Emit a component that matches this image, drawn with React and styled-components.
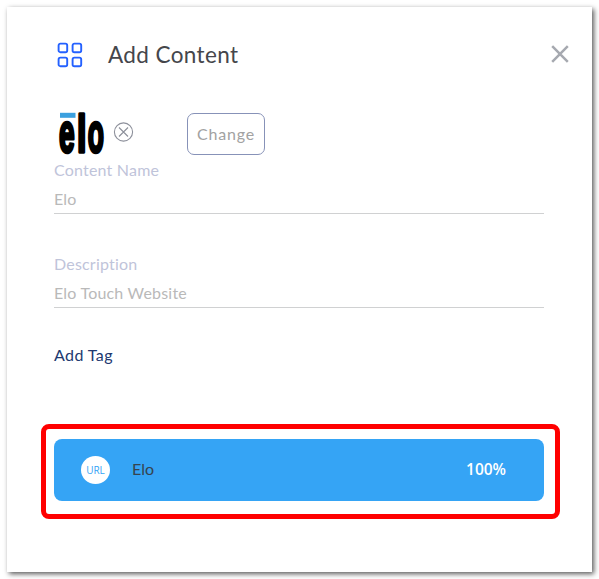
import React from "react";
import styled, { createGlobalStyle } from "styled-components";

const Global = createGlobalStyle`
  * { box-sizing: border-box; }
  body { margin: 0; background: #fff; font-family: Lato, "Liberation Sans", sans-serif; }
`;

const Page = styled.main`
  width: 599px;
  height: 579px;
  padding: 7px;
  overflow: hidden;
`;

const Dialog = styled.section`
  width: 585px;
  height: 565px;
  padding: 31px 48px 0 47px;
  background: #fff;
  box-shadow: 2px 2px 5px rgba(0, 0, 0, 0.65);
`;

const Header = styled.header`
  display: flex;
  align-items: center;
  height: 34px;
  padding-left: 3px;
  margin-right: -25px;
`;

const Text = styled.span`
  display: block;
  white-space: nowrap;
  font-family: ${(p) => p.$font || "inherit"};
  font-size: ${(p) => p.$size || 16}px;
  font-weight: ${(p) => p.$weight || 400};
  line-height: 20px;
  letter-spacing: ${(p) => p.$spacing || 0}px;
  color: ${(p) => p.$color};
`;

const Title = styled(Text).attrs({ as: "h1" })`
  flex: 1;
  margin: 0 0 0 25px;
`;

const IconButton = styled.button`
  display: flex;
  padding: 0;
  border: 0;
  background: none;
`;

const CloseButton = styled(IconButton)`
  margin: 0 0 2px 0;
`;

const LogoRow = styled.div`
  display: flex;
  height: 44px;
  margin-top: 39px;
  padding-left: 3px;
`;

const Logo = styled.svg`
  display: block;
  overflow: visible;
`;

const RemoveButton = styled(IconButton)`
  align-self: flex-start;
  margin: 10px 0 0 6px;
`;

const ChangeButton = styled.button`
  display: flex;
  align-items: center;
  justify-content: center;
  width: 78px;
  height: 42px;
  margin: 2px 0 0 53px;
  padding: 0;
  border: 1px solid #8792b8;
  border-radius: 7px;
  background: #fff;
  font-family: inherit;
`;

const Field = styled.div`
  height: 59px;
  margin-top: ${(p) => p.$gap}px;
  padding-top: 5px;
  border-bottom: 1px solid #d0d1d2;
`;

const Value = styled.div`
  margin-top: 9px;
`;

const TagLink = styled.div`
  margin-top: 37px;
`;

const Highlight = styled.div`
  width: 519px;
  height: 95px;
  margin: 59px 0 0 -13px;
  padding: 10px 11px 0 8px;
  border: 5px solid #ff0000;
  border-radius: 8px;
`;

const UploadCard = styled.div`
  display: flex;
  align-items: center;
  width: 490px;
  height: 62px;
  padding: 0 38px 0 27px;
  border-radius: 8px;
  background: #35a4f5;
`;

const UrlBadge = styled.div`
  display: flex;
  align-items: center;
  justify-content: center;
  width: 29px;
  height: 28px;
  border-radius: 50%;
  background: #fff;
`;

const FileName = styled.div`
  flex: 1;
  margin: -3px 0 0 22px;
`;

const Percent = styled.div`
  margin-top: -3px;
`;

const GridIcon = () => (
  <svg width="26" height="26" viewBox="0 0 26 26" fill="none" stroke="#2461ff" strokeWidth="1.9">
    <rect x="1.6" y="1.6" width="8.6" height="8.6" rx="1.8" />
    <rect x="15.6" y="1.6" width="8.6" height="8.6" rx="1.8" />
    <rect x="1.6" y="15.6" width="8.6" height="8.6" rx="1.8" />
    <rect x="15.6" y="15.6" width="8.6" height="8.6" rx="1.8" />
  </svg>
);

const CloseIcon = () => (
  <svg width="18" height="18" viewBox="0 0 18 18" stroke="#a6a9b0" strokeWidth="2.5">
    <path d="M1.2 1.2 16.8 16.8M16.8 1.2 1.2 16.8" />
  </svg>
);

const EloLogo = () => (
  <Logo width="50" height="44" viewBox="0 0 50 44" role="img" aria-label="elo">
    <rect x="3" y="1.8" width="15.5" height="5" fill="#3ba0df" />
    <g fontFamily="Liberation Sans" fontWeight="700" fontSize="53" stroke="#000" strokeWidth="3.4" strokeLinejoin="round">
      <text transform="translate(2.1 40.8) scale(.53 1.03)">e</text>
      <text transform="translate(20 41.1) scale(.64 .98)">l</text>
      <text transform="translate(30.8 40.8) scale(.5 1.03)">o</text>
    </g>
  </Logo>
);

const RemoveIcon = () => (
  <svg width="21" height="21" viewBox="0 0 21 21" fill="none" stroke="#8d909b" strokeWidth="1.1">
    <circle cx="10.5" cy="11" r="9.1" />
    <path d="m6 6.5 9 9m0-9-9 9" />
  </svg>
);

export default function App() {
  return (
    <>
      <Global />
      <Page>
        <Dialog>
          <Header>
            <GridIcon />
            <Title $size={22.5} $spacing={0.38} $color="#45464b">Add Content</Title>
            <CloseButton aria-label="Close"><CloseIcon /></CloseButton>
          </Header>
          <LogoRow>
            <EloLogo />
            <RemoveButton aria-label="Remove logo"><RemoveIcon /></RemoveButton>
            <ChangeButton><Text $spacing={0.8} $color="#a2a2a2">Change</Text></ChangeButton>
          </LogoRow>
          <Field $gap={0}>
            <Text $spacing={0.2} $color="#bfc4da">Content Name</Text>
            <Value><Text $spacing={0.2} $color="#b9b9b9">Elo</Text></Value>
          </Field>
          <Field $gap={35}>
            <Text $spacing={0.2} $color="#bfc4da">Description</Text>
            <Value><Text $spacing={0.2} $color="#b9b9b9">Elo Touch Website</Text></Value>
          </Field>
          <TagLink><Text $spacing={0.4} $color="#21396f">Add Tag</Text></TagLink>
          <Highlight>
            <UploadCard>
              <UrlBadge><Text $font='"Open Sans"' $size={10} $weight={500} $color="#35a4f5">URL</Text></UrlBadge>
              <FileName><Text $color="#36434f">Elo</Text></FileName>
              <Percent><Text $font='"Open Sans"' $size={15.5} $weight={600} $color="#fff">100%</Text></Percent>
            </UploadCard>
          </Highlight>
        </Dialog>
      </Page>
    </>
  );
}
